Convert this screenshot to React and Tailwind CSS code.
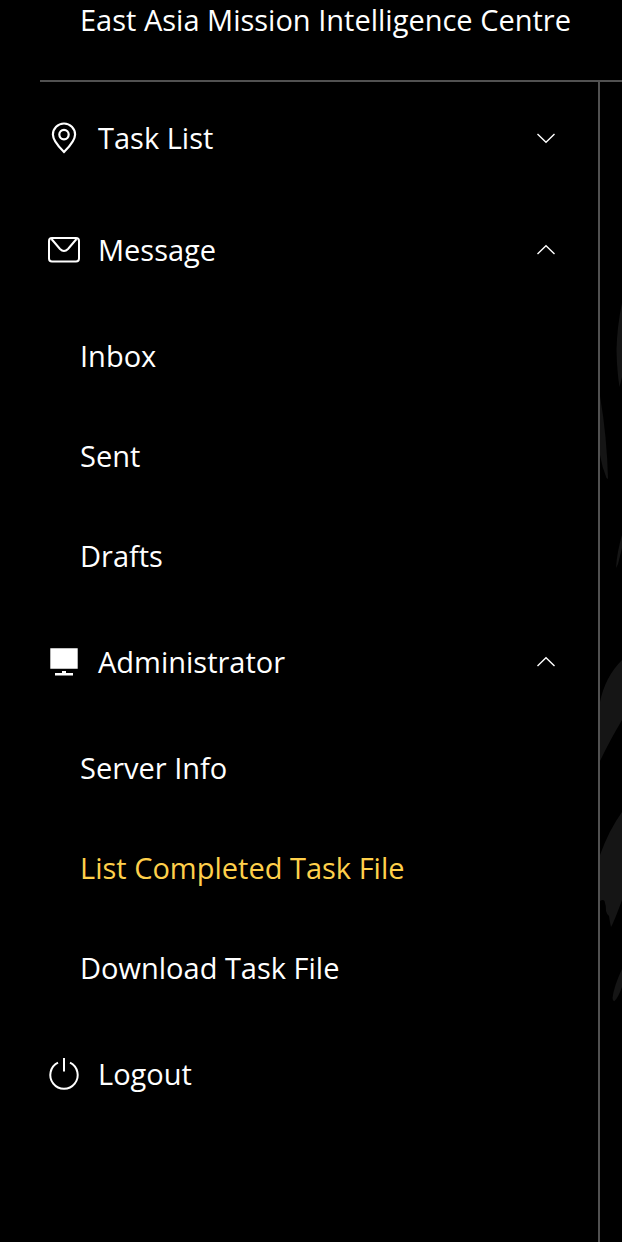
import { useState } from 'react';

const PinIcon = () => (
  <svg viewBox="0 0 32 32" className="size-8 shrink-0" fill="none" stroke="currentColor" strokeWidth="2.2" aria-hidden="true">
    <path d="M16 30C13 27 4.900 19.500 4.900 12.600A11.100 11.100 0 0 1 27.100 12.600C27.100 19.500 19 27 16 30Z" />
    <circle cx="16" cy="12.600" r="4.700" />
  </svg>
);

const MailIcon = () => (
  <svg viewBox="0 0 32 32" className="size-8 shrink-0" fill="none" stroke="currentColor" strokeWidth="2" aria-hidden="true">
    <rect x="1" y="4" width="30" height="23.500" rx="3" />
    <path d="M3.500 5L12 15Q16 19 20 15L28.500 5" />
  </svg>
);

const MonitorIcon = () => (
  <svg viewBox="0 0 32 32" className="size-8 shrink-0" fill="currentColor" aria-hidden="true">
    <path d="M2.300 2.300H29.700V22.700H2.300ZM14 25H18V27H25V29.500H7V27H14Z" />
  </svg>
);

const PowerIcon = () => (
  <svg viewBox="0 0 32 32" className="size-8 shrink-0" fill="none" stroke="currentColor" strokeWidth="2" aria-hidden="true">
    <path d="M10 4.700A13.700 13.700 0 1 0 22 4.700M16 0V13.500" />
  </svg>
);

const Chevron = ({ open }) => (
  <svg viewBox="0 0 24 24" className="size-6 shrink-0" fill="none" stroke="currentColor" strokeWidth="1.400" aria-hidden="true">
    <path d={open ? 'M3.500 16L12 7.800L20.500 16' : 'M3.500 8L12 16.200L20.500 8'} />
  </svg>
);

const menu = [
  { id: 'tasks', label: 'Task List', Icon: PinIcon, items: ['Pending Tasks', 'Finished Tasks'] },
  { id: 'message', label: 'Message', Icon: MailIcon, items: ['Inbox', 'Sent', 'Drafts'] },
  {
    id: 'admin',
    label: 'Administrator',
    Icon: MonitorIcon,
    items: ['Server Info', 'List Completed Task File', 'Download Task File'],
  },
];

const App = () => {
  const [opened, setOpened] = useState(['message', 'admin']);
  const [active, setActive] = useState('List Completed Task File');

  const toggle = (id) => {
    setOpened((prev) => (prev.includes(id) ? prev.filter((o) => o !== id) : [...prev, id]));
  };

  const handleSelect = (e, item) => {
    e.preventDefault();
    setActive(item);
  };

  return (
    <div className="min-h-screen flex flex-col bg-black pl-10 font-['Open_Sans',sans-serif] text-[29px] leading-10 text-white">
      <header className="border-b-2 border-[#515151] pb-10 pl-10">
        <h1 className="whitespace-nowrap">East Asia Mission Intelligence Centre</h1>
      </header>

      <div className="flex flex-1">
        {/* Side menu */}
        <nav className="w-140 shrink-0 border-r-2 border-[#515151]">
          {menu.map(({ id, label, Icon, items }) => {
            const isOpen = opened.includes(id);
            return (
              <div key={id}>
                <button
                  type="button"
                  aria-expanded={isOpen}
                  onClick={() => toggle(id)}
                  className="flex h-28 w-full cursor-pointer items-center gap-[18px] pl-2 pr-10 text-left"
                >
                  <Icon />
                  <span className="flex-1">{label}</span>
                  <Chevron open={isOpen} />
                </button>
                {isOpen && (
                  <ul>
                    {items.map((item) => (
                      <li key={item}>
                        <a
                          href="#"
                          onClick={(e) => handleSelect(e, item)}
                          className={`flex h-25 items-center pl-10 ${active === item ? 'text-[#ffd04b]' : 'text-white'}`}
                        >
                          {item}
                        </a>
                      </li>
                    ))}
                  </ul>
                )}
              </div>
            );
          })}
          <button type="button" className="flex h-28 w-full cursor-pointer items-center gap-[18px] pl-2 pr-10 text-left">
            <PowerIcon />
            <span>Logout</span>
          </button>
        </nav>

        {/* Faint artwork behind the content */}
        <main className="relative flex-1 overflow-hidden">
          <svg viewBox="0 0 22 1160" className="absolute left-0 top-0 h-290 w-5.5" fill="#151515" aria-hidden="true">
            <path d="M22 221Q17 245 16.500 268Q17 290 19.500 305L22 295Z" />
            <path d="M0 314Q7 355 8 397L6.500 396Q2 385 0 373Z" />
            <path d="M22 453Q17 470 16 486L18 482L22 466Z" />
            <path d="M22 578Q5 595 0 620V679Q9 660 22 638Z" />
            <path d="M22 730Q9 748 0 773V819Q3 817 4.500 819Q6 823 6 829Q7 833 9 834Q10 841 11 845Q14 840 22 818Z" />
            <path d="M22 887Q14 904 12.500 916Q13 920 14.500 919Q18 916 22 905Z" />
          </svg>
        </main>
      </div>
    </div>
  );
};

export default App;
